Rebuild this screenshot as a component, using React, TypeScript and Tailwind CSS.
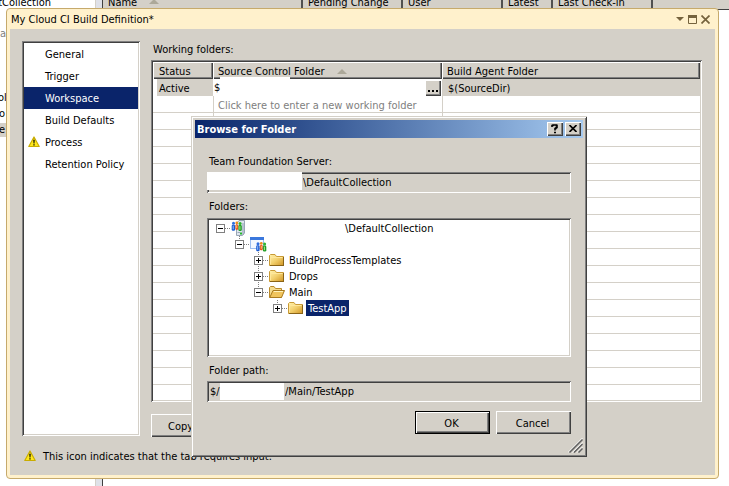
import React from "react";

const raised =
  "bg-[#d4d0c8] shadow-[inset_1px_1px_#ffffff,inset_-1px_-1px_#404040,inset_-2px_-2px_#808080]";
const sunken =
  "p-[2px] shadow-[inset_1px_1px_#808080,inset_-1px_-1px_#ffffff,inset_2px_2px_#404040,inset_-2px_-2px_#d4d0c8]";

function WarningIcon() {
  return (
    <svg width="12" height="12" viewBox="0 0 12 12" className="shrink-0" aria-hidden="true">
      <path d="M6 1 L11.2 10.5 H0.8 Z" fill="#ffe81c" stroke="#c9ac00" strokeWidth="1.2" strokeLinejoin="round" />
      <path d="M5.2 3.8 H6.8 L6.5 7.4 H5.5 Z M5.3 8.2 H6.7 V9.5 H5.3 Z" fill="#1a1a00" />
    </svg>
  );
}

function People() {
  return (
    <>
      <circle cx="2" cy="1.8" r="1.5" fill="#2f6fe0" />
      <rect x="0.2" y="3.2" width="3.4" height="6" rx="1.3" fill="#1c5bd0" />
      <rect x="1.2" y="4.2" width="1" height="3.6" fill="#8fc0ff" />
      <circle cx="5.3" cy="1.4" r="1.4" fill="#f08a1c" />
      <rect x="3.9" y="2.9" width="2.8" height="5.4" rx="1.1" fill="#e8501c" />
      <rect x="4.8" y="3.8" width="0.9" height="3" fill="#ffd27a" />
      <circle cx="8.6" cy="2" r="1.5" fill="#2fb52f" />
      <rect x="6.9" y="3.6" width="3.4" height="6" rx="1.3" fill="#1f9c24" />
      <rect x="7.9" y="4.6" width="1" height="3.6" fill="#a4ef8c" />
    </>
  );
}

function ServerIcon() {
  return (
    <svg width="16" height="16" viewBox="0 0 16 16" className="shrink-0" aria-hidden="true">
      <path d="M5.5 3.5 L8 0.5 H13.5 V13 L11.5 15.5 H5.5 Z" fill="#dfe6ee" stroke="#98a5b5" />
      <path d="M12 3 V15" stroke="#8d9db2" />
      <path d="M6.5 12.5 H9" stroke="#9aa8ba" />
      <rect x="9" y="12.5" width="2" height="2" fill="#25b52c" />
      <g transform="translate(0.5 1.5)">
        <People />
      </g>
    </svg>
  );
}

function ProjectIcon() {
  return (
    <svg width="17" height="16" viewBox="0 0 17 16" className="shrink-0" aria-hidden="true">
      <rect x="0.5" y="1.5" width="13" height="11" fill="#f4f9ff" stroke="#9dbff0" />
      <rect x="0" y="1" width="14" height="3" fill="#3b78dd" />
      <g transform="translate(6 6)">
        <People />
      </g>
    </svg>
  );
}

function FolderIcon() {
  return (
    <svg width="16" height="16" viewBox="0 0 16 16" className="shrink-0" aria-hidden="true">
      <defs>
        <linearGradient id="folder" x1="0" y1="0" x2="1" y2="1">
          <stop offset="0" stopColor="#fff3b0" />
          <stop offset="0.5" stopColor="#f2cf6c" />
          <stop offset="1" stopColor="#cf9424" />
        </linearGradient>
      </defs>
      <path d="M0.5 13.5 V3.5 L1.5 2.5 H6 L7.5 4.5 H14.5 V13.5 Z" fill="url(#folder)" stroke="#c99a35" />
      <path d="M1.5 12.5 V5.5 H13.5" fill="none" stroke="#ffe79a" />
      <path d="M1 13.5 H15 M14.5 5 V14" stroke="#8a6417" />
    </svg>
  );
}

function OpenFolderIcon() {
  return (
    <svg width="16" height="16" viewBox="0 0 16 16" className="shrink-0" aria-hidden="true">
      <path d="M0.5 13.5 V3.5 L1.5 2.5 H5 L6.5 4.5 H12.5 V13.5 Z" fill="#f5dc8d" stroke="#b98a2c" />
      <path d="M0.8 13.5 L4 6.5 H15.5 L12.5 13.5 Z" fill="#f0c45c" stroke="#a97a1e" strokeLinejoin="round" />
      <path d="M4.8 7.5 H14" fill="none" stroke="#fff3bd" />
    </svg>
  );
}

function Toggle({ open }: { open: boolean }) {
  return (
    <button
      type="button"
      aria-label={open ? "Collapse" : "Expand"}
      className="mr-[6px] size-[9px] shrink-0 border border-[#808080] bg-white"
    >
      <svg width="7" height="7" viewBox="0 0 7 7" className="block" aria-hidden="true">
        <path d={open ? "M1 3.5 H6" : "M1 3.5 H6 M3.5 1 V6"} stroke="#000000" />
      </svg>
    </button>
  );
}

const indents = ["pl-[7px]", "pl-[26px]", "pl-[45px]", "pl-[64px]"];

const nodes = [
  { level: 0, open: true, icon: <ServerIcon />, label: "\\DefaultCollection", gap: "ml-[96px]" },
  { level: 1, open: true, icon: <ProjectIcon />, label: "" },
  { level: 2, open: false, icon: <FolderIcon />, label: "BuildProcessTemplates" },
  { level: 2, open: false, icon: <FolderIcon />, label: "Drops" },
  { level: 2, open: true, icon: <OpenFolderIcon />, label: "Main" },
  { level: 3, open: false, icon: <FolderIcon />, label: "TestApp", selected: true },
];

function FolderTree() {
  return (
    <div className={`relative h-[139px] bg-white ${sunken}`}>
      <svg width="110" height="100" className="absolute left-[2px] top-[2px]" aria-hidden="true">
        <path
          d="M16 8.5 H22 M30.5 16 V20 M35 24.5 H41 M49.5 32 V72 M54 40.5 H60 M54 56.5 H60 M54 72.5 H60 M68.5 80 V84 M73 88.5 H79"
          stroke="#808080"
          strokeDasharray="1 1"
          fill="none"
        />
      </svg>
      <ul className="relative" aria-label="Folders">
        {nodes.map((n, i) => (
          <li key={i} className={`flex h-4 items-center ${indents[n.level]}`}>
            <Toggle open={n.open} />
            {n.icon}
            {n.label && (
              <span
                className={`${n.gap ?? "ml-[2px]"} h-4 px-[2px] leading-[18px] ${
                  n.selected ? "bg-[#0a246a] text-white" : ""
                }`}
              >
                {n.label}
              </span>
            )}
          </li>
        ))}
      </ul>
    </div>
  );
}

function BrowseDialog() {
  return (
    <section
      role="dialog"
      aria-label="Browse for Folder"
      className="absolute left-[191px] top-[116px] w-[396px] bg-[#d4d0c8] p-1 shadow-[inset_1px_1px_#d4d0c8,inset_-1px_-1px_#404040,inset_2px_2px_#ffffff,inset_-2px_-2px_#808080]"
    >
      <header className="flex h-[18px] items-center gap-[2px] bg-linear-to-r from-[#0a246a] to-[#a6caf0] pl-[2px] pr-[2px]">
        <h2 className="flex-1 pt-[2px] font-bold text-white">Browse for Folder</h2>
        <button type="button" aria-label="Help" className={`flex h-[14px] w-4 items-center justify-center ${raised}`}>
          <svg width="8" height="10" viewBox="0 0 8 10" aria-hidden="true">
            <path d="M1 3 V1.5 H2 V1 H5.5 V1.5 H6 V3.5 H5 V4.5 H4 V6.5 M3 8.5 H5" fill="none" stroke="#000" strokeWidth="1.6" />
          </svg>
        </button>
        <button type="button" aria-label="Close" className={`flex h-[14px] w-4 items-center justify-center pb-px pr-px ${raised}`}>
          <svg width="8" height="7" viewBox="0 0 8 7" aria-hidden="true">
            <path d="M0.5 0 L7.5 7 M7.5 0 L0.5 7" stroke="#000" strokeWidth="1.6" />
          </svg>
        </button>
      </header>
      <div className="px-3 pb-[19px] pt-[17px]">
        <label htmlFor="server" className="block pb-[3px] pl-[2px] leading-[14px]">
          Team Foundation Server:
        </label>
        <div className={`flex h-[21px] ${sunken}`}>
          <span className="-ml-[2px] -mt-[2px] h-[18px] w-[95px] shrink-0 bg-white" />
          <input id="server" readOnly value="\DefaultCollection" className="min-w-0 flex-1 pl-px outline-none" />
        </div>
        <div className="pb-[4px] pl-[2px] pt-[7px] leading-[14px]">Folders:</div>
        <FolderTree />
        <label htmlFor="path" className="block pb-[3px] pl-[2px] pt-[7px] leading-[14px]">
          Folder path:
        </label>
        <div className={`flex h-[21px] items-center ${sunken}`}>
          <span className="w-[11px] shrink-0 pl-px">$/</span>
          <span className="h-[17px] w-16 shrink-0 bg-white" />
          <input id="path" readOnly value="/Main/TestApp" className="min-w-0 flex-1 pl-px outline-none" />
        </div>
        <div className="flex justify-end gap-[6px] pt-[9px]">
          <button
            type="button"
            className="h-[23px] w-[75px] border border-black bg-[#d4d0c8] pr-[2px] pt-[2px] shadow-[inset_1px_1px_#ffffff,inset_-1px_-1px_#404040,inset_-2px_-2px_#808080]"
          >
            OK
          </button>
          <button type="button" className={`h-[23px] w-[75px] pr-[2px] pt-[2px] ${raised}`}>
            Cancel
          </button>
        </div>
      </div>
      <svg width="15" height="15" viewBox="0 0 15 15" className="absolute bottom-1 right-1" aria-hidden="true">
        <path d="M0 14.5 L14.5 0 M4.5 14.5 L14.5 4.5 M9 14.5 L14.5 9" stroke="#ffffff" />
        <path d="M1.5 14.5 L14.5 1.5 M6 14.5 L14.5 6 M10.5 14.5 L14.5 10.5" stroke="#606060" strokeWidth="1.5" />
      </svg>
    </section>
  );
}

const tabs = ["General", "Trigger", "Workspace", "Build Defaults", "Process", "Retention Policy"];

function TabList() {
  return (
    <nav className={`h-[395px] w-[118px] shrink-0 bg-white ${sunken}`}>
      {tabs.map((t) => (
        <button
          key={t}
          type="button"
          className={`flex h-[22px] w-full items-center pl-1 text-left ${
            t === "Workspace" ? "bg-[#0a246a] text-white" : ""
          }`}
        >
          <span className="w-[17px] shrink-0">{t === "Process" && <WarningIcon />}</span>
          <span className="pt-[2px]">{t}</span>
        </button>
      ))}
    </nav>
  );
}

const line = "border-[#d4d0c8]";

function FoldersTable() {
  return (
    <div className={`bg-white ${sunken}`}>
      <table className="w-full table-fixed border-separate border-spacing-0">
        <colgroup>
          <col className="w-[60px]" />
          <col className="w-[229px]" />
          <col />
        </colgroup>
        <thead>
          <tr className="h-[17px] text-left leading-[15px]">
            <th className={`p-0 pl-[6px] pt-[2px] font-normal ${raised}`}>Status</th>
            <th className={`p-0 pl-[5px] pt-[2px] font-normal ${raised}`}>
              <span className="flex items-center gap-3">
                Source Control Folder
                <svg width="10" height="5" viewBox="0 0 10 5" aria-hidden="true">
                  <path d="M5 0 L10 5 H0 Z" fill="#aca899" />
                </svg>
              </span>
            </th>
            <th className={`p-0 pl-[5px] pt-[2px] font-normal ${raised}`}>Build Agent Folder</th>
          </tr>
        </thead>
        <tbody>
          <tr className="h-[17px] leading-[15px]">
            <td className="border-l-4 border-white bg-[#d4d0c8] p-0 pl-[2px] pt-[2px]">Active</td>
            <td className="bg-white p-0">
              <div className="relative flex h-[17px] items-center">
                <span className="absolute -top-[2px] left-[7px] h-[2px] w-[70px] bg-white" />
                <input aria-label="Source control folder" defaultValue="$" className="min-w-0 flex-1 pl-px outline-none" />
                <button
                  type="button"
                  aria-label="Browse"
                  className={`mr-px flex h-4 w-4 items-end justify-center pb-[4px] ${raised}`}
                >
                  <svg width="10" height="2" viewBox="0 0 10 2" aria-hidden="true">
                    <path d="M0 0 h2 v2 h-2 Z M4 0 h2 v2 h-2 Z M8 0 h2 v2 h-2 Z" fill="#000" />
                  </svg>
                </button>
              </div>
            </td>
            <td className="bg-[#d4d0c8] p-0 pl-[6px] pt-[2px]">$(SourceDir)</td>
          </tr>
          <tr className="h-[17px]">
            <td className={`border-b p-0 ${line}`} />
            <td className={`border-b border-l p-0 pl-[4px] pt-[3px] leading-[13px] text-[#808080] ${line}`}>
              Click here to enter a new working folder
            </td>
            <td className={`border-b border-l p-0 ${line}`} />
          </tr>
          {Array.from({ length: 16 }, (_, i) => (
            <tr key={i} className="h-[17px]">
              <td className={`border-b p-0 ${line}`} />
              <td className={`border-b border-l p-0 ${line}`} />
              <td className={`border-b border-l p-0 ${line}`} />
            </tr>
          ))}
          <tr className="h-[15px]">
            <td className="p-0" />
            <td className={`border-l p-0 ${line}`} />
            <td className={`border-l p-0 ${line}`} />
          </tr>
        </tbody>
      </table>
    </div>
  );
}

const headerCells = [
  { t: "Name", w: "w-[200px]" },
  { t: "Pending Change", w: "w-[100px]" },
  { t: "User", w: "w-[100px]" },
  { t: "Latest", w: "w-[50px]" },
  { t: "Last Check-in", w: "w-[100px]" },
];

function Backdrop() {
  return (
    <div className="absolute inset-0 flex overflow-hidden bg-white">
      <div className="relative w-[95px] shrink-0 overflow-hidden">
        <span className="absolute -top-[4px] right-[44px] leading-[14px]">rtCollection</span>
        <span className="absolute left-0 top-[27px] leading-[14px] text-[#808080]">a</span>
        <span className="absolute -left-[2px] top-[91px] leading-[14px]">ol</span>
        <span className="absolute -left-px top-[107px] leading-[14px]">o</span>
        <span className="absolute -left-px top-[123px] w-2 bg-[#d4d0c8] leading-[14px]">e</span>
      </div>
      <div className="w-[7px] shrink-0 border-l border-[#d4d0c8] bg-[#dfe1e8]" />
      <div className="min-w-0 flex-1 border-l border-[#404040]">
        <div className="flex h-[10px] items-start overflow-hidden border-b border-[#404040] bg-[#d4d0c8]">
          {headerCells.map((c) => (
            <div
              key={c.t}
              className={`-mt-[4px] flex h-[14px] shrink-0 gap-5 border-r-2 border-[#505050] pl-[5px] leading-[14px] ${c.w}`}
            >
              {c.t}
              {c.t === "Name" && (
                <svg width="10" height="5" viewBox="0 0 10 5" className="-ml-2 mt-[3px]" aria-hidden="true">
                  <path d="M5 0 L10 5 H0 Z" fill="#aca899" />
                </svg>
              )}
            </div>
          ))}
        </div>
      </div>
    </div>
  );
}

export default function App() {
  return (
    <div className="relative min-h-screen overflow-hidden bg-white pb-[7px] pl-[6px] pr-[10px] pt-2 font-['DejaVu_Sans_Condensed','Noto_Sans',sans-serif] text-[11px] leading-[14px] text-black">
      <Backdrop />
      <main className="relative rounded-[4px] border border-[#c6aa6c] bg-[#fff1cc] px-[3px] pb-[3px]">
        <header className="flex h-5 items-center gap-1 pl-[1px] pr-[5px] text-[#75633d]">
          <h1 className="flex-1 pt-[2px] text-black">My Cloud CI Build Definition*</h1>
          <button type="button" aria-label="Window menu">
            <svg width="8" height="4" viewBox="0 0 8 4" aria-hidden="true">
              <path d="M0 0 H8 L4 4 Z" fill="currentColor" />
            </svg>
          </button>
          <button type="button" aria-label="Maximize">
            <svg width="9" height="9" viewBox="0 0 9 9" aria-hidden="true">
              <path d="M0.5 1 V8.5 H8.5 V1 M0 1.5 H9" fill="none" stroke="currentColor" />
              <path d="M0 1.5 H9" stroke="currentColor" strokeWidth="3" />
            </svg>
          </button>
          <button type="button" aria-label="Close">
            <svg width="9" height="9" viewBox="0 0 9 9" aria-hidden="true">
              <path d="M0.5 0.5 L8.5 8.5 M8.5 0.5 L0.5 8.5" stroke="currentColor" strokeWidth="1.7" />
            </svg>
          </button>
        </header>
        <div className="bg-[#d4d0c8] pb-[11px] pl-3 pr-[13px] pt-3">
          <div className="flex gap-[11px]">
            <TabList />
            <div className="min-w-0 flex-1">
              <div className="pb-[3px] pl-[2px] pt-[2px] leading-[14px]">Working folders:</div>
              <FoldersTable />
              <button type="button" className={`mt-3 h-[23px] w-[180px] pl-[17px] pt-[2px] text-left ${raised}`}>
                Copy
              </button>
            </div>
          </div>
          <p className="flex items-center gap-[7px] pl-[2px] pt-[11px]">
            <WarningIcon />
            <span className="pt-[2px]">This icon indicates that the tab requires input.</span>
          </p>
        </div>
      </main>
      <BrowseDialog />
    </div>
  );
}
